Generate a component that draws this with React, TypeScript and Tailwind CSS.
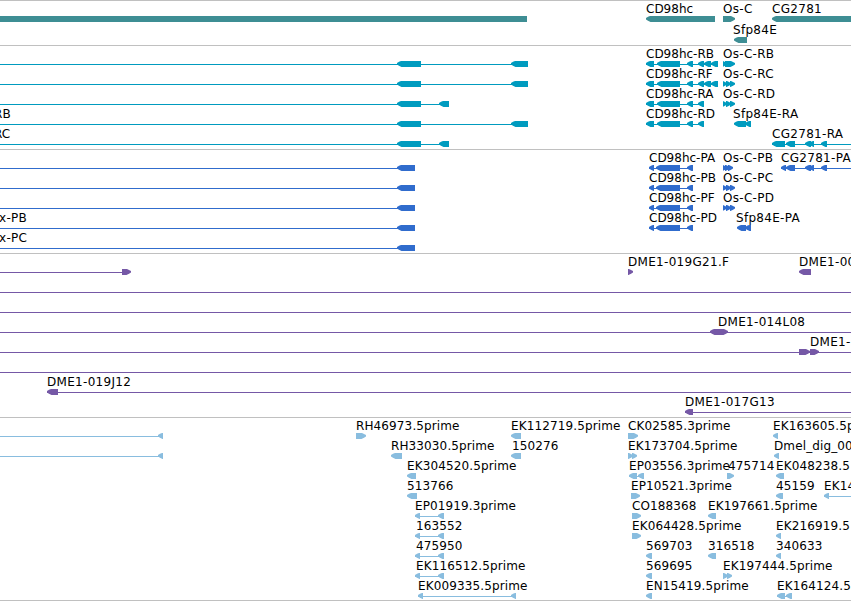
import React from 'react';

// [kind, start, end]: '<' and '>' are arrows, '=' is a block, '-' is a thin line
type Segment = ['<' | '>' | '=' | '-', number, number];
type Label = [string, number];

interface Row {
  labels?: Label[];
  segments: Segment[];
}

interface TrackProps {
  rows: Row[];
  color: string;
  rowClass?: string;
  className?: string;
}

const cdsRB: Segment[] = [
  ['-', 646, 717], ['<', 646, 654], ['<', 657, 680], ['<', 687, 693],
  ['<', 698, 704], ['<', 704, 711], ['<', 711, 718],
];
const cdsRA: Segment[] = [
  ['-', 646, 704], ['<', 646, 654], ['<', 657, 680], ['<', 687, 693], ['<', 698, 704],
];
const cdsP: Segment[] = [['-', 649, 693], ['<', 649, 654], ['<', 656, 680], ['<', 687, 693]];
const osc: Segment[] = [['>', 723, 727], ['>', 726, 731], ['>', 730, 735]];
const longStart: Segment[] = [['-', 0, 527], ['<', 397, 421], ['<', 511, 528]];
const shortStart: Segment[] = [['-', 0, 448], ['<', 397, 421], ['<', 439, 449]];
const protStart: Segment[] = [['-', 0, 414], ['<', 397, 415]];
const pair: Segment[] = [['-', 415, 444], ['<', 415, 420], ['<', 438, 444]];
const full: Segment[] = [['-', 0, 851]];

const genes: Row[] = [
  {
    labels: [['CD98hc', 646], ['Os-C', 723], ['CG2781', 772]],
    segments: [['=', 0, 527], ['<', 646, 715], ['>', 723, 735], ['<', 772, 860]],
  },
  { labels: [['Sfp84E', 733]], segments: [['<', 734, 747]] },
];

const transcripts: Row[] = [
  {
    labels: [['CD98hc-RB', 646], ['Os-C-RB', 723]],
    segments: [...longStart, ...cdsRB, ['>', 723, 727], ['>', 725, 735]],
  },
  { labels: [['CD98hc-RF', 646], ['Os-C-RC', 723]], segments: [...longStart, ...cdsRB, ...osc] },
  { labels: [['CD98hc-RA', 646], ['Os-C-RD', 723]], segments: [...shortStart, ...cdsRA, ...osc] },
  {
    labels: [['RB', -6], ['CD98hc-RD', 646], ['Sfp84E-RA', 733]],
    segments: [...longStart, ...cdsRA, ['<', 734, 746], ['<', 745, 751]],
  },
  {
    labels: [['RC', -6], ['CG2781-RA', 772]],
    segments: [
      ...shortStart, ['-', 772, 851], ['<', 772, 785], ['<', 786, 795],
      ['<', 805, 811], ['<', 809, 814], ['<', 821, 827],
    ],
  },
];

const proteins: Row[] = [
  {
    labels: [['CD98hc-PA', 649], ['Os-C-PB', 723], ['CG2781-PA', 781]],
    segments: [
      ...protStart, ...cdsP, ['>', 723, 727], ['>', 725, 730], ['>', 728, 733],
      ['-', 781, 851], ['<', 781, 786], ['<', 786, 795], ['<', 805, 811], ['<', 809, 814], ['<', 821, 827],
    ],
  },
  { labels: [['CD98hc-PB', 649], ['Os-C-PC', 723]], segments: [...protStart, ...cdsP, ...osc] },
  { labels: [['CD98hc-PF', 649], ['Os-C-PD', 723]], segments: [...protStart, ...cdsP, ...osc] },
  {
    labels: [['x-PB', -1], ['CD98hc-PD', 649], ['Sfp84E-PA', 736]],
    segments: [...protStart, ...cdsP, ['<', 737, 746], ['<', 745, 751]],
  },
  { labels: [['x-PC', -1]], segments: protStart },
];

const clones: Row[] = [
  {
    labels: [['DME1-019G21.F', 628], ['DME1-00', 799]],
    segments: [['-', 0, 123], ['>', 122, 131], ['>', 628, 633], ['<', 799, 811]],
  },
  { segments: full },
  { segments: full },
  { labels: [['DME1-014L08', 718]], segments: [...full, ['<', 710, 720], ['>', 718, 728]] },
  { labels: [['DME1-', 810]], segments: [...full, ['>', 799, 810], ['>', 810, 819]] },
  { segments: full },
  { labels: [['DME1-019J12', 47]], segments: [['-', 47, 851], ['<', 47, 58]] },
  { labels: [['DME1-017G13', 685]], segments: [['-', 685, 851], ['<', 685, 693]] },
];

const ests: Row[] = [
  {
    labels: [['RH46973.5prime', 356], ['EK112719.5prime', 511], ['CK02585.3prime', 628], ['EK163605.5p', 773]],
    segments: [['-', 0, 162], ['<', 158, 163], ['>', 356, 366], ['<', 511, 521], ['>', 628, 638], ['<', 773, 778]],
  },
  {
    labels: [['RH33030.5prime', 391], ['150276', 512], ['EK173704.5prime', 628], ['Dmel_dig_00', 774]],
    segments: [
      ['-', 0, 162], ['<', 158, 163], ['<', 391, 402], ['<', 511, 521],
      ['>', 628, 633], ['>', 632, 637], ['<', 774, 779],
    ],
  },
  {
    labels: [['EK304520.5prime', 407], ['EP03556.3prime', 629], ['475714', 728], ['EK048238.5', 776]],
    segments: [['<', 407, 416], ['-', 629, 644], ['<', 629, 637], ['<', 638, 644], ['>', 727, 734], ['<', 776, 784]],
  },
  {
    labels: [['513766', 407], ['EP10521.3prime', 631], ['45159', 776], ['EK14', 824]],
    segments: [['<', 407, 417], ['>', 631, 640], ['<', 776, 783], ['-', 824, 851], ['<', 824, 829]],
  },
  {
    labels: [['EP01919.3prime', 415], ['CO188368', 632], ['EK197661.5prime', 708]],
    segments: [...pair, ['>', 632, 641], ['<', 708, 716]],
  },
  {
    labels: [['163552', 416], ['EK064428.5prime', 632], ['EK216919.5', 776]],
    segments: [...pair, ['>', 632, 641], ['<', 776, 781]],
  },
  {
    labels: [['475950', 416], ['569703', 646], ['316518', 708], ['340633', 776]],
    segments: [...pair, ['<', 646, 652], ['<', 708, 716], ['<', 776, 781]],
  },
  {
    labels: [['EK116512.5prime', 416], ['569695', 646], ['EK197444.5prime', 723]],
    segments: [...pair, ['<', 646, 652], ['>', 723, 728], ['>', 727, 732]],
  },
  {
    labels: [['EK009335.5prime', 418], ['EN15419.5prime', 646], ['EK164124.5', 777]],
    segments: [
      ['-', 418, 516], ['<', 418, 423], ['<', 511, 516], ['<', 646, 652],
      ['-', 777, 792], ['<', 777, 785], ['<', 786, 792],
    ],
  },
];

const segmentPath = ([kind, a, b]: Segment) => {
  if (kind === '-') return `M${a} 3H${b}V4H${a}Z`;
  if (kind === '=') return `M${a} 0H${b}V6H${a}Z`;
  if (kind === '<') return `M${a} 2L${a + 2} 0.8L${a + 4} 0H${b}V6H${a + 4.5}L${a + 2} 4.7L${a} 3.6Z`;
  return `M${b} 2L${b - 2} 0.9L${b - 4} 0H${a}V6H${b - 4.5}L${b - 2} 4.7L${b} 3.6Z`;
};

const tracking = (text: string) => {
  if (text.startsWith('CD98')) return 'tracking-normal';
  if (/^(Os|Sfp|CG|DME|x-)/.test(text)) return 'tracking-[0.3px]';
  return 'tracking-[0.12px]';
};

const FeatureRow: React.FC<{ row: Row; rowClass: string }> = ({ row, rowClass }) => (
  <div className={`relative w-full pt-[15px] ${rowClass}`}>
    <svg className="block h-1.5 w-[851px]" viewBox="0 0 851 6" fill="currentColor">
      {row.segments.map((segment, i) => (
        <path key={i} d={segmentPath(segment)} />
      ))}
    </svg>
    {row.labels?.map(([text, x]) => (
      <span
        key={text}
        className={`absolute top-0 leading-4 whitespace-pre text-black ${tracking(text)}`}
        style={{ left: x }}
      >
        {text}
      </span>
    ))}
  </div>
);

const Track: React.FC<TrackProps> = ({ rows, color, rowClass = 'h-5', className = 'pb-[3px]' }) => (
  <section className={`border-t border-[#c0c0c0] ${color} ${className}`}>
    {rows.map((row, i) => (
      <FeatureRow key={i} row={row} rowClass={rowClass} />
    ))}
  </section>
);

const App: React.FC = () => (
  <main className="h-[601px] w-[851px] overflow-hidden border-b border-[#c0c0c0] bg-white font-['DejaVu_Sans',sans-serif] text-[12px]">
    <Track rows={genes} color="text-[#3e8e94]" rowClass="h-[21px]" className="pb-[2px]" />
    <Track rows={transcripts} color="text-[#009bbf]" />
    <Track rows={proteins} color="text-[#306ccd]" />
    <Track rows={clones} color="text-[#7558a6]" />
    <Track rows={ests} color="text-[#89bddf]" className="pb-[2px]" />
  </main>
);

export default App;
